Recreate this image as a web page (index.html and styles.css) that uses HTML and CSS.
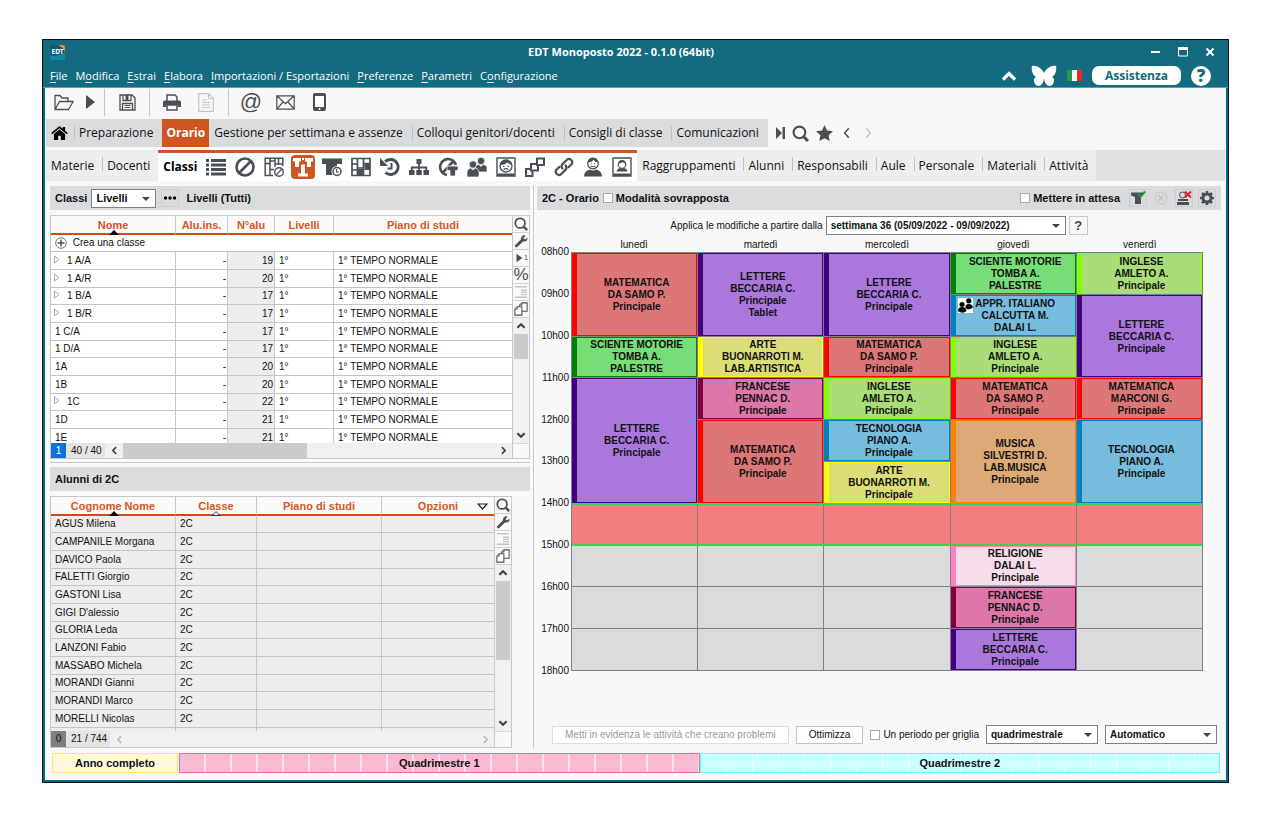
FILE: index.html
```html
<!DOCTYPE html>
<html lang="it">
<head>
  <meta charset="UTF-8" />
  <meta name="viewport" content="width=device-width, initial-scale=1.0" />
  <title>EDT Monoposto 2022</title>
  <link rel="stylesheet" href="styles.css">
</head>
<body>
  <!-- shared icons -->
  <svg class="sprite" aria-hidden="true">
    <symbol id="i-search" viewBox="0 0 16 16"><circle cx="7" cy="7" r="5.500" fill="none" stroke="currentColor" stroke-width="2"/><path d="M10.500 10.500L15 15" stroke="currentColor" stroke-width="2.800"/></symbol>
    <symbol id="i-wrench" viewBox="0 0 16 16"><path d="M2.600 13.600L9.500 7" stroke="currentColor" stroke-width="3.200" stroke-linecap="round"/><path d="M13.200 1.600L11 4.200l.6 1.600 1.800.3 2-2.200c.5 2.600-1.200 4.700-3.600 4.700-2.500 0-4-1.800-3.700-4.100C8.400 2.300 10.700.8 13.200 1.600z" fill="currentColor"/></symbol>
    <symbol id="i-lines" viewBox="0 0 16 16"><path d="M1 2h14M1 14h14M8 6h7M8 8.500h7M8 11h7" stroke="#c4c4c4" stroke-width="1.500"/></symbol>
    <symbol id="i-copy" viewBox="0 0 16 16"><g fill="#fff" stroke="currentColor" stroke-width="1.200"><path d="M6.500 3.500L9 1h6v9.500H6.500z"/><path d="M9 1v2.500H6.500"/><path d="M1 8l2.500-2.500H9V15H1z"/><path d="M3.500 5.500V8H1"/></g></symbol>
    <symbol id="i-up" viewBox="0 0 10 10"><path d="M2 6.500L5 3.500l3 3" fill="none" stroke="currentColor" stroke-width="1.800"/></symbol>
    <symbol id="i-down" viewBox="0 0 10 10"><path d="M2 3.500L5 6.500l3-3" fill="none" stroke="currentColor" stroke-width="1.800"/></symbol>
    <symbol id="i-left" viewBox="0 0 10 10"><path d="M6.500 2L3.500 5l3 3" fill="none" stroke="currentColor" stroke-width="1.600"/></symbol>
    <symbol id="i-right" viewBox="0 0 10 10"><path d="M3.500 2L6.500 5l-3 3" fill="none" stroke="currentColor" stroke-width="1.600"/></symbol>
    <symbol id="i-prev" viewBox="0 0 10 10"><path d="M6.500 1L3 5l3.500 4" fill="none" stroke="currentColor" stroke-width="1.200"/></symbol>
    <symbol id="i-next" viewBox="0 0 10 10"><path d="M3.500 1L7 5 3.500 9" fill="none" stroke="currentColor" stroke-width="1.200"/></symbol>
    <symbol id="i-tri" viewBox="0 0 8 10"><path d="M1.500 1v7L6 4.500z" fill="#fff" stroke="#aaa"/></symbol>
  </svg>

  <div class="window">
    <header class="titlebar">
      <div class="title-row">
        <svg class="logo" viewBox="0 0 16 16"><rect width="16" height="16" rx="2" fill="#0b5a74"/><path d="M9 0h5a2 2 0 0 1 2 2v6C15 4 12 2 9 0z" fill="#f08a3c"/><path d="M0 11c5 1 10 0 16-3v6a2 2 0 0 1-2 2H2a2 2 0 0 1-2-2z" fill="#1487a0"/><text x="8" y="10" text-anchor="middle" font-size="7" font-weight="bold" fill="#fff" font-family="Noto Sans, sans-serif">EDT</text></svg>
        <h1>EDT Monoposto 2022 - 0.1.0 (64bit)</h1>
        <div class="win-buttons">
          <button aria-label="Riduci"><svg viewBox="0 0 10 10"><path d="M0 5h9" stroke="#fff" stroke-width="2"/></svg></button>
          <button aria-label="Ingrandisci"><svg viewBox="0 0 10 10"><path d="M.5 1v8h9V1z" fill="none" stroke="#fff"/><path d="M0 1.500h10" stroke="#fff" stroke-width="3"/></svg></button>
          <button aria-label="Chiudi"><svg viewBox="0 0 10 10"><path d="M1.500 1.500l7 7M8.500 1.500l-7 7" stroke="#fff" stroke-width="2"/></svg></button>
        </div>
      </div>
      <div class="menu-row">
        <nav class="menu">
          <a href="#"><u>F</u>ile</a>
          <a href="#">M<u>o</u>difica</a>
          <a href="#"><u>E</u>strai</a>
          <a href="#"><u>E</u>labora</a>
          <a href="#"><u>I</u>mportazioni / Esportazioni</a>
          <a href="#"><u>P</u>referenze</a>
          <a href="#"><u>P</u>arametri</a>
          <a href="#">C<u>o</u>nfigurazione</a>
        </nav>
        <div class="help">
          <svg width="16" height="12" viewBox="0 0 16 12"><path d="M2 9.500L8 3.500l6 6" fill="none" stroke="#fff" stroke-width="3.200"/></svg>
          <svg width="26" height="22" viewBox="0 0 26 22"><path d="M13 8C11 4 6 0 1 1c-1 4 .5 9 4 11-2.500 1-2.500 4-1.500 6 1 3 5 4 7 1.500C12 18 13 15 13 13.500c0 1.500 1 4.500 2.500 6 2 2.500 6 1.500 7-1.500 1-2 1-5-1.500-6 3.500-2 5-7 4-11-5-1-10 3-12 7z" fill="#fff"/></svg>
          <svg width="15" height="11" viewBox="0 0 15 11"><path fill="#1f9a43" d="M0 0h5v11H0z"/><path fill="#fff" d="M5 0h5v11H5z"/><path fill="#e02b2b" d="M10 0h5v11h-5z"/></svg>
          <button class="pill">Assistenza</button>
          <button class="round" aria-label="Aiuto">?</button>
        </div>
      </div>
    </header>

    <div class="toolbar">
      <button aria-label="Apri"><svg width="20" height="17" viewBox="0 0 20 17"><path d="M1 15.500V1.500h5l2 2.500h6v3.500M1 15.500L5.500 7.500H19.200L14.500 15.500z" fill="none" stroke="currentColor" stroke-width="1.300" stroke-linejoin="round"/></svg></button>
      <button class="narrow" aria-label="Recenti"><svg width="9" height="14" viewBox="0 0 9 14"><path d="M0 0l9 7-9 7z" fill="currentColor"/></svg></button>
      <i></i>
      <button aria-label="Salva"><svg width="17" height="17" viewBox="0 0 17 17"><path d="M1 1h12l3 3v12H1zM4 1v5.500h8V1M3.500 16v-6.500h10V16" fill="none" stroke="currentColor" stroke-width="1.300"/><path d="M7 1.500h2v4H7zM5.500 11.500h6M5.500 13.500h6" stroke="currentColor" fill="currentColor"/></svg></button>
      <i></i>
      <button aria-label="Stampa"><svg width="18" height="17" viewBox="0 0 18 17"><path d="M4 7V1h8l2 2v4" fill="none" stroke="currentColor" stroke-width="1.500"/><path d="M1.500 6.500h15a1.500 1.500 0 0 1 1.500 1.500v5h-3v-2H3v2H0V8a1.500 1.500 0 0 1 1.500-1.500z" fill="currentColor"/><path d="M4 11v5h10v-5z" fill="#f8f8f8" stroke="currentColor" stroke-width="1.500"/></svg></button>
      <button aria-label="Documento" disabled><svg width="16" height="19" viewBox="0 0 16 19"><path d="M.7.700h9.800l4.800 4.800v12.800H.700zM10.500.700v4.800h4.800M4 7h5M4 9.500h8M4 12h8M4 14.500h8" fill="none" stroke="#c6c6c6" stroke-width="1.200"/></svg></button>
      <i></i>
      <button class="at" aria-label="E-mail">@</button>
      <button aria-label="Messaggio"><svg width="19" height="15" viewBox="0 0 19 15"><path d="M.8.800h17.400v13.400H.800zM.800.800l8.700 8 8.700-8M.800 14.200L7 7M18.200 14.200L12 7" fill="none" stroke="currentColor" stroke-width="1.200"/></svg></button>
      <button aria-label="Telefono"><svg width="13" height="18" viewBox="0 0 13 18"><rect width="13" height="18" rx="2" fill="currentColor"/><path d="M2 3h9v11H2z" fill="#fff"/><circle cx="6.500" cy="16" r="1" fill="#fff"/></svg></button>
    </div>

    <nav class="main-tabs">
      <div class="strip">
        <button class="home" aria-label="Home"><svg width="17" height="14" viewBox="0 0 18 15"><path d="M9 0L0 7.500l1.200 1.300L9 2.500l7.800 6.300L18 7.500l-3-2.500V1h-2.500v2z"/><path d="M3 8.500l6-4.800 6 4.800V15h-4.500v-4.500h-3V15H3z"/></svg></button>
        <button>Preparazione</button>
        <button class="active">Orario</button>
        <button class="first">Gestione per settimana e assenze</button>
        <button>Colloqui genitori/docenti</button>
        <button>Consigli di classe</button>
        <button>Comunicazioni</button>
      </div>
      <div class="tab-tools">
        <svg width="9" height="12" viewBox="0 0 9 12"><path d="M0 0l6 6-6 6zM6.500 0H9v12H6.500z" fill="currentColor"/></svg>
        <svg width="17" height="17"><use href="#i-search"/></svg>
        <svg width="17" height="16" viewBox="0 0 17 16"><path d="M8.500 0l2.500 5.400 6 .8-4.400 4.100L13.700 16 8.500 13.200 3.300 16l1.100-5.700L0 6.200l6-.8z" fill="currentColor"/></svg>
        <svg width="14" height="12"><use href="#i-prev"/></svg>
        <svg class="off" width="14" height="12"><use href="#i-next"/></svg>
      </div>
    </nav>

    <nav class="sub-tabs">
      <div class="strip">
        <button class="first">Materie</button>
        <button>Docenti</button>
      </div>
      <div class="current">
        <b>Classi</b>
        <svg viewBox="0 0 20 20"><path d="M0 2h3v3H0zM0 6.500h3v3H0zM0 11h3v3H0zM0 15.500h3v3H0zM5 2h15v3H5zM5 6.500h15v3H5zM5 11h15v3H5zM5 15.500h15v3H5z" fill="currentColor"/></svg>
        <svg viewBox="0 0 20 20"><circle cx="10" cy="10" r="8.500" fill="none" stroke="currentColor" stroke-width="2.600"/><path d="M4 16L16 4" stroke="currentColor" stroke-width="2.600"/></svg>
        <svg viewBox="0 0 20 20"><path d="M9 18.500H1.200V1.200h17.600V9M1 6.500h5M6 1v17.500M6 12.500h4M11 1v9M11 7h7.500M6 4h5M14.500 1v6" fill="none" stroke="currentColor" stroke-width="1.500"/><circle cx="15" cy="15" r="4.300" fill="#fff" stroke="currentColor" stroke-width="1.400"/><path d="M12 18l6-6" stroke="currentColor" stroke-width="1.300"/></svg>
        <svg class="picked" viewBox="0 0 24 24"><rect width="24" height="24" rx="4" fill="#cf5520"/><path d="M2 3h8v3.500H8V12H4V6.500H2zM14 3h8v3.500h-2V12h-4V6.500h-2zM10 9.500h4v9h3v3H7v-3h3zM11 3h2v2h-2z" fill="#fff"/></svg>
        <svg viewBox="0 0 20 20"><path d="M0 1.500h20V7h-5v11H4V7H0z" fill="currentColor"/><circle cx="15" cy="14.500" r="4.500" fill="#fff" stroke="#fff" stroke-width="2"/><circle cx="15" cy="14.500" r="4" fill="#fff" stroke="currentColor" stroke-width="1.500"/><path d="M14.500 12v3h2.500" fill="none" stroke="currentColor" stroke-width="1.200"/></svg>
        <svg viewBox="0 0 20 20"><path d="M1 1.500h18v17H1zM6.500 1.500v17M12.500 1.500v17M1 7h5.500M1 13h5.500M6.500 11h6M12.500 6.500h6" fill="none" stroke="currentColor" stroke-width="1.700"/><path d="M6.500 12h6v6.500h-6zM13.500 7H19v6h-5.500z" fill="currentColor"/></svg>
        <svg viewBox="0 0 20 20"><path d="M5 4.500Q8 2.300 11 2.500A7.500 7.500 0 1 1 5.500 15.500" fill="none" stroke="currentColor" stroke-width="2.800"/><path d="M0 1v8h8z" fill="currentColor"/><path d="M11.500 6v5.500H7.500" fill="none" stroke="currentColor" stroke-width="2"/></svg>
        <svg viewBox="0 0 20 20"><path d="M7.500 2h5v5h-5zM0 13h5.500v5H0zM7.300 13h5.500v5H7.300zM14.500 13H20v5h-5.500z" fill="currentColor"/><path d="M10 6v8M2.800 14v-3.500h14.500V14" fill="none" stroke="currentColor" stroke-width="1.800"/></svg>
        <svg viewBox="0 0 20 20"><path d="M9 18A8 8 0 1 1 17.800 8M4.500 16L15.500 4" fill="none" stroke="currentColor" stroke-width="2.600"/><path d="M9 9h11v4.500h-2.500V19H12v-5.500H9z" fill="currentColor" stroke="#fff" stroke-width=".8"/></svg>
        <svg viewBox="0 0 20 20"><g fill="currentColor" stroke="#fff" stroke-width=".7"><path d="M8.500 15V9.500q2-2.500 3.500-2l2 2 2-2q4 .5 4 3V15z"/><circle cx="14" cy="4" r="3.700"/><path d="M0 20v-5q.5-3.500 3.500-4l2.500 2 2.500-2q3 .5 3.500 4v5z"/><circle cx="6" cy="7.500" r="3.700"/></g></svg>
        <svg viewBox="0 0 20 20"><path d="M1 1h18v18H1z" fill="none" stroke="currentColor" stroke-width="1.400"/><circle cx="10" cy="9" r="6" fill="#fff" stroke="currentColor" stroke-width="1.300"/><path d="M4 8q1-5 6-5t6 5q-3-.5-4.500-2.500Q9 8 4 8z" fill="currentColor"/><path d="M7 9.500h1.500M11.500 9.500H13M7.500 12.700q2.500-2 5 0" stroke="currentColor" stroke-width="1.200" fill="none"/><path d="M1.500 16.500h17V19h-17z" fill="currentColor"/></svg>
        <svg viewBox="0 0 20 20"><g fill="#fff" stroke="currentColor" stroke-width="2"><path d="M1 12h6.500v7H1z"/><path d="M6 7h7v6.500H6z"/><path d="M12 1.500h7v6.500h-7z"/></g></svg>
        <svg viewBox="0 0 20 20"><g fill="none" stroke="currentColor" stroke-width="2.200" stroke-linecap="round"><path d="M8.500 11.500c-1.300-1.600-1.200-3.200.2-4.600L13 2.700c2.600-2.400 7 1.500 4.500 4.500l-3 3"/><path d="M11.500 8.500c1.300 1.600 1.200 3.200-.2 4.600L7 17.300c-2.600 2.400-7-1.500-4.500-4.500l3-3"/></g></svg>
        <svg viewBox="0 0 20 20"><path d="M1 19.500q0-5.500 6-7 3 2 6 0 6 1.500 6 7z" fill="currentColor"/><circle cx="10" cy="6.500" r="5.300" fill="#fff" stroke="currentColor" stroke-width="1.200"/><path d="M4.800 5.500Q5.500 1 10 1t5.200 4.500Q12 5 10.500 3 8.500 5.500 4.800 5.500z" fill="currentColor"/><path d="M7.800 6.700h1M11.200 6.700h1M7.500 9q2.500 1.500 5 0" stroke="currentColor" fill="none"/></svg>
        <svg viewBox="0 0 20 20"><path d="M1 1h18v18H1z" fill="#fff" stroke="currentColor" stroke-width="1.400"/><path d="M4.500 14.500q.5-3 3.500-3.500 2 1 4 0 3 .5 3.500 3.500zM1.500 16.500h17V19h-17z" fill="currentColor"/><circle cx="10" cy="7.500" r="3.800" fill="#fff" stroke="currentColor" stroke-width="1.200"/><path d="M6.200 6.500Q7 3.200 10 3.200t3.800 3.300Q11.500 6 10.500 5 9 6.500 6.200 6.500z" fill="currentColor"/></svg>
      </div>
      <div class="strip">
        <button class="first">Raggruppamenti</button>
        <button>Alunni</button>
        <button>Responsabili</button>
        <button>Aule</button>
        <button>Personale</button>
        <button>Materiali</button>
        <button>Attività</button>
      </div>
    </nav>

    <main class="panels">
      <section class="left">
        <div class="bar">
          <label for="filter">Classi</label>
          <span class="select filter"><select id="filter"><option>Livelli</option></select></span>
          <button class="flat dots" aria-label="Altro"><svg viewBox="0 0 16 16"><circle cx="3.500" cy="8" r="1.700"/><circle cx="8" cy="8" r="1.700"/><circle cx="12.500" cy="8" r="1.700"/></svg></button>
          <span>Livelli (Tutti)</span>
        </div>
        <div class="list classes">
          <div class="rows">
            <table>
              <colgroup><col class="c125"><col class="c52"><col class="c47"><col class="c59"><col></colgroup>
              <thead>
                <tr><th>Nome<svg class="sort" viewBox="0 0 10 5"><path d="M0 5l5-5 5 5z"/></svg></th><th>Alu.ins.</th><th>N°alu</th><th>Livelli</th><th>Piano di studi</th></tr>
              </thead>
              <tbody>
                <tr class="new"><td colspan="5"><svg width="12" height="12" viewBox="0 0 12 12"><circle cx="6" cy="6" r="5.300" fill="#fff" stroke="#777"/><path d="M6 2.500v7M2.500 6h7" stroke="#555" stroke-width="1.600"/></svg> Crea una classe</td></tr>
                <tr><td class="sub"><svg><use href="#i-tri"/></svg>1 A/A</td><td>-</td><td>19</td><td>1°</td><td>1° TEMPO NORMALE</td></tr>
                <tr><td class="sub"><svg><use href="#i-tri"/></svg>1 A/R</td><td>-</td><td>20</td><td>1°</td><td>1° TEMPO NORMALE</td></tr>
                <tr><td class="sub"><svg><use href="#i-tri"/></svg>1 B/A</td><td>-</td><td>17</td><td>1°</td><td>1° TEMPO NORMALE</td></tr>
                <tr><td class="sub"><svg><use href="#i-tri"/></svg>1 B/R</td><td>-</td><td>17</td><td>1°</td><td>1° TEMPO NORMALE</td></tr>
                <tr><td>1 C/A</td><td>-</td><td>17</td><td>1°</td><td>1° TEMPO NORMALE</td></tr>
                <tr><td>1 D/A</td><td>-</td><td>17</td><td>1°</td><td>1° TEMPO NORMALE</td></tr>
                <tr><td>1A</td><td>-</td><td>20</td><td>1°</td><td>1° TEMPO NORMALE</td></tr>
                <tr><td>1B</td><td>-</td><td>20</td><td>1°</td><td>1° TEMPO NORMALE</td></tr>
                <tr><td class="sub"><svg><use href="#i-tri"/></svg>1C</td><td>-</td><td>22</td><td>1°</td><td>1° TEMPO NORMALE</td></tr>
                <tr><td>1D</td><td>-</td><td>21</td><td>1°</td><td>1° TEMPO NORMALE</td></tr>
                <tr><td>1E</td><td>-</td><td>21</td><td>1°</td><td>1° TEMPO NORMALE</td></tr>
              </tbody>
            </table>
          </div>
          <div class="side">
            <button aria-label="Cerca"><svg><use href="#i-search"/></svg></button>
            <button aria-label="Opzioni"><svg><use href="#i-wrench"/></svg></button>
            <button class="level" aria-label="Livello 1"><svg viewBox="0 0 12 14"><path d="M3 2l7 5-7 5z" fill="currentColor"/></svg><small>1</small></button>
            <button class="pct">%</button>
            <button aria-label="Righe"><svg><use href="#i-lines"/></svg></button>
            <button aria-label="Copia"><svg><use href="#i-copy"/></svg></button>
            <div class="vscroll"><svg><use href="#i-up"/></svg><span class="thumb"></span><svg><use href="#i-down"/></svg></div>
          </div>
          <div class="foot">
            <span class="sel">1</span><span class="tot">40 / 40</span>
            <svg><use href="#i-left"/></svg><span class="thumb"></span><svg class="end"><use href="#i-right"/></svg>
          </div>
          <div class="corner"></div>
        </div>

        <div class="split"></div>

        <div class="bar">Alunni di 2C</div>
        <div class="list pupils">
          <div class="rows">
            <table>
              <colgroup><col class="c125"><col class="c81"><col class="c125"><col></colgroup>
              <thead>
                <tr><th>Cognome Nome<svg class="sort" viewBox="0 0 10 5"><path d="M0 5l5-5 5 5z"/></svg></th><th>Classe<svg class="sort" viewBox="0 0 10 5"><path d="M1 4.500L5 .7l4 3.800z" fill="#fff" stroke="#222" stroke-width=".9"/></svg></th><th>Piano di studi</th><th>Opzioni<svg class="drop" viewBox="0 0 11 7"><path d="M1 1h9L5.500 6z" fill="#fff" stroke="#222" stroke-width="1.200"/></svg></th></tr>
              </thead>
              <tbody>
                <tr><td>AGUS Milena</td><td>2C</td><td></td><td></td></tr>
                <tr><td>CAMPANILE Morgana</td><td>2C</td><td></td><td></td></tr>
                <tr><td>DAVICO Paola</td><td>2C</td><td></td><td></td></tr>
                <tr><td>FALETTI Giorgio</td><td>2C</td><td></td><td></td></tr>
                <tr><td>GASTONI Lisa</td><td>2C</td><td></td><td></td></tr>
                <tr><td>GIGI D'alessio</td><td>2C</td><td></td><td></td></tr>
                <tr><td>GLORIA Leda</td><td>2C</td><td></td><td></td></tr>
                <tr><td>LANZONI Fabio</td><td>2C</td><td></td><td></td></tr>
                <tr><td>MASSABO Michela</td><td>2C</td><td></td><td></td></tr>
                <tr><td>MORANDI Gianni</td><td>2C</td><td></td><td></td></tr>
                <tr><td>MORANDI Marco</td><td>2C</td><td></td><td></td></tr>
                <tr><td>MORELLI Nicolas</td><td>2C</td><td></td><td></td></tr>
                <tr><td></td><td></td><td></td><td></td></tr>
              </tbody>
            </table>
          </div>
          <div class="side">
            <button aria-label="Cerca"><svg><use href="#i-search"/></svg></button>
            <button aria-label="Opzioni"><svg><use href="#i-wrench"/></svg></button>
            <button aria-label="Righe"><svg><use href="#i-lines"/></svg></button>
            <button aria-label="Copia"><svg><use href="#i-copy"/></svg></button>
            <div class="vscroll"><svg><use href="#i-up"/></svg><span class="thumb"></span><svg><use href="#i-down"/></svg></div>
          </div>
          <div class="foot idle">
            <span class="sel">0</span><span class="tot">21 / 744</span>
            <svg><use href="#i-left"/></svg><svg class="end"><use href="#i-right"/></svg>
          </div>
          <div class="corner"></div>
        </div>
      </section>

      <section class="right">
        <div class="bar">
          <span>2C - Orario</span>
          <label><input type="checkbox"> Modalità sovrapposta</label>
          <label class="wait"><input type="checkbox"> Mettere in attesa</label>
          <button class="flat" aria-label="Posiziona"><svg viewBox="0 0 16 16"><path d="M1 2.500h12V6h-2v8H5V7L1 5.500z" fill="currentColor"/><path d="M8 4l2.500 3L15 1.500" fill="none" stroke="#1a9a3a" stroke-width="2"/></svg></button>
          <button class="flat plain" aria-label="Annulla" disabled><svg viewBox="0 0 16 16"><circle cx="8" cy="8" r="6" fill="none" stroke="#c2c3c5"/><path d="M5.500 5.500l5 5M10.500 5.500l-5 5" stroke="#c2c3c5" stroke-width="1.400"/></svg></button>
          <button class="flat" aria-label="Elimina"><svg viewBox="0 0 16 16"><circle cx="6.500" cy="5" r="3" fill="none" stroke="currentColor"/><path d="M2 9h10v2H2zM1 12h12v3H1z" fill="currentColor"/><path d="M9 1.500l6 6M15 1.500l-6 6" stroke="#e3202a" stroke-width="1.800"/></svg></button>
          <button class="flat" aria-label="Impostazioni"><svg viewBox="0 0 16 16"><circle cx="8" cy="8" r="4" fill="none" stroke="currentColor" stroke-width="3"/><path d="M8 1v3M8 12v3M1 8h3M12 8h3M3 3l2 2M11 11l2 2M13 3l-2 2M5 11l-2 2" stroke="currentColor" stroke-width="2.600"/></svg></button>
        </div>

        <div class="apply">
          <label for="week">Applica le modifiche a partire dalla</label>
          <span class="select"><select id="week"><option>settimana 36 (05/09/2022 - 09/09/2022)</option></select></span>
          <button class="ask">?</button>
        </div>

        <div class="planner">
          <div class="days"><span>lunedì</span><span>martedì</span><span>mercoledì</span><span>giovedì</span><span>venerdì</span></div>
          <div class="hours">
            <span>08h00</span><span>09h00</span><span>10h00</span><span>11h00</span><span>12h00</span><span>13h00</span><span>14h00</span><span>15h00</span><span>16h00</span><span>17h00</span><span>18h00</span>
          </div>
          <!-- d = day, h = first hour, n = length in hours -->
          <div class="week">
            <div class="lesson mat d1 h1 n2">MATEMATICA<br>DA SAMO P.<br>Principale</div>
            <div class="lesson sci d1 h3">SCIENTE MOTORIE<br>TOMBA A.<br>PALESTRE</div>
            <div class="lesson let d1 h4 n3">LETTERE<br>BECCARIA C.<br>Principale</div>

            <div class="lesson let d2 h1 n2">LETTERE<br>BECCARIA C.<br>Principale<br>Tablet</div>
            <div class="lesson art d2 h3">ARTE<br>BUONARROTI M.<br>LAB.ARTISTICA</div>
            <div class="lesson fra d2 h4">FRANCESE<br>PENNAC D.<br>Principale</div>
            <div class="lesson mat d2 h5 n2">MATEMATICA<br>DA SAMO P.<br>Principale</div>

            <div class="lesson let d3 h1 n2">LETTERE<br>BECCARIA C.<br>Principale</div>
            <div class="lesson mat d3 h3">MATEMATICA<br>DA SAMO P.<br>Principale</div>
            <div class="lesson ing d3 h4">INGLESE<br>AMLETO A.<br>Principale</div>
            <div class="lesson tec d3 h5">TECNOLOGIA<br>PIANO A.<br>Principale</div>
            <div class="lesson art d3 h6">ARTE<br>BUONARROTI M.<br>Principale</div>

            <div class="lesson sci d4 h1">SCIENTE MOTORIE<br>TOMBA A.<br>PALESTRE</div>
            <div class="lesson tec d4 h2"><svg class="group" viewBox="0 0 15 15"><path fill="#fff" d="M0 0h15v15H0z"/><circle cx="10.800" cy="2.800" r="2.600"/><path d="M7.500 10q-.5-4 3.300-4T15 9.500q-2.500 2.500-6 1.500z"/><circle cx="4" cy="6.500" r="2.800" stroke="#fff" stroke-width=".5"/><path d="M0 13q0-4 4-4t4.500 4Q4.500 16.500 0 13z"/></svg>APPR. ITALIANO<br>CALCUTTA M.<br>DALAI L.</div>
            <div class="lesson ing d4 h3">INGLESE<br>AMLETO A.<br>Principale</div>
            <div class="lesson mat d4 h4">MATEMATICA<br>DA SAMO P.<br>Principale</div>
            <div class="lesson mus d4 h5 n2">MUSICA<br>SILVESTRI D.<br>LAB.MUSICA<br>Principale</div>

            <div class="lesson ing d5 h1">INGLESE<br>AMLETO A.<br>Principale</div>
            <div class="lesson let d5 h2 n2">LETTERE<br>BECCARIA C.<br>Principale</div>
            <div class="lesson mat d5 h4">MATEMATICA<br>MARCONI G.<br>Principale</div>
            <div class="lesson tec d5 h5 n2">TECNOLOGIA<br>PIANO A.<br>Principale</div>

            <div class="pause"><span></span><span></span><span></span><span></span><span></span></div>

            <div class="free d1 h8"></div><div class="free d2 h8"></div><div class="free d3 h8"></div>
            <div class="lesson rel d4 h8">RELIGIONE<br>DALAI L.<br>Principale</div>
            <div class="free d5 h8"></div>
            <div class="free d1 h9"></div><div class="free d2 h9"></div><div class="free d3 h9"></div>
            <div class="lesson fra d4 h9">FRANCESE<br>PENNAC D.<br>Principale</div>
            <div class="free d5 h9"></div>
            <div class="free d1 h10"></div><div class="free d2 h10"></div><div class="free d3 h10"></div>
            <div class="lesson let d4 h10">LETTERE<br>BECCARIA C.<br>Principale</div>
            <div class="free d5 h10"></div>
          </div>
        </div>

        <div class="actions">
          <button class="show" disabled>Metti in evidenza le attività che creano problemi</button>
          <button>Ottimizza</button>
          <label><input type="checkbox"> Un periodo per griglia</label>
          <span class="select"><select aria-label="Periodo"><option>quadrimestrale</option></select></span>
          <span class="select"><select aria-label="Modo"><option>Automatico</option></select></span>
        </div>
      </section>
    </main>

    <footer class="periods">
      <div class="year">Anno completo</div>
      <div class="q1">Quadrimestre 1</div>
      <div class="q2">Quadrimestre 2</div>
    </footer>
  </div>
</body>
</html>
```
FILE: styles.css
```css
* { box-sizing: border-box; }
body {
  margin: 0;
  padding: 39px 42px;
  background: #fff;
  color: #111;
  font: 10px/12px "Liberation Sans", Arial, sans-serif;
}
button, select { font: inherit; color: inherit; margin: 0; padding: 0; border: 0; background: none; }
button svg { display: block; }
.sprite { display: none; }

.window {
  border: 1px solid #0a1216;
  background: #f8f8f8;
  box-shadow: inset 2px 0 #006a80, inset -2px 0 #006a80, inset 0 -2px #006a80;
  padding-bottom: 9px;
}

/* title bar and menu */
.titlebar {
  background: #146a7e;
  color: #fff;
  border-bottom: 1px solid #4fa3b5;
  font-family: "Open Sans", "Noto Sans", sans-serif;
}
.title-row { display: flex; align-items: center; height: 24px; padding: 0 13px 0 7px; }
.logo { width: 15px; height: 15px; }
h1 { flex: 1; margin: 0; padding-left: 26px; font-size: 11px; line-height: 14px; text-align: center; }
.win-buttons { display: flex; gap: 17px; }
.win-buttons svg { width: 10px; height: 10px; }
.menu-row { display: flex; justify-content: space-between; align-items: center; height: 23px; padding: 0 17px 0 7px; }
.menu { display: flex; gap: 8px; font-size: 11px; line-height: 16px; }
.menu a { color: #fff; text-decoration: none; }
.menu u { text-underline-offset: 2px; }
.help { display: flex; align-items: center; gap: 10px; }
.help svg:first-child { margin-right: 4px; }
.pill {
  width: 89px;
  height: 19px;
  border-radius: 7px;
  background: #fff;
  color: #146a7e;
  font-size: 12px;
  font-weight: bold;
}
.round {
  width: 20px;
  height: 20px;
  border-radius: 10px;
  background: #fff;
  color: #146a7e;
  font-size: 17px;
  font-weight: 900;
  line-height: 20px;
}

/* toolbar */
.toolbar { display: flex; align-items: center; height: 31px; padding: 0 0 3px 4px; color: #4a4f55; }
.toolbar button { width: 34px; height: 27px; display: flex; align-items: center; justify-content: center; }
.toolbar .narrow { width: 18px; }
.toolbar i { width: 1px; height: 27px; margin: 0 5px; background: #c8c8c8; }
.toolbar .at { font: 22px/22px "Liberation Sans", sans-serif; }

/* tabs */
.main-tabs, .sub-tabs { display: flex; font-family: "Open Sans", "Noto Sans", sans-serif; font-size: 12px; margin: 0 3px; }
.main-tabs { height: 28px; margin-bottom: 3px; }
.main-tabs .strip { display: flex; background: #dadbdd; }
.strip button { position: relative; padding: 0 9px 0 5px; }
.strip button::before {
  content: "";
  position: absolute;
  left: 0;
  top: 7px;
  height: 14px;
  border-left: 1px solid #c0c0c0;
}
.strip .home::before, .strip .first::before, .strip .active::before { display: none; }
.strip .home { padding: 0 6px 0 5px; }
.strip .active { background: #cf5520; color: #fff; font-weight: bold; padding: 0 4px; }
.tab-tools { display: flex; align-items: center; gap: 7px; padding-left: 8px; color: #4a4f55; }
.off { color: #c4c4c4; }
.sub-tabs { height: 31px; margin-bottom: 5px; background: #e0e0e0; }
.sub-tabs .strip { display: flex; background: #ededed; }
.sub-tabs .strip button { padding-right: 8px; }
.current {
  flex: none;
  width: 479px;
  display: flex;
  align-items: center;
  justify-content: space-between;
  padding: 0 5px 0 5px;
  border-top: 3px solid #cf5520;
  background: #fff;
  color: #4a4f55;
}
.current b { color: #000; }
.current svg { width: 20px; height: 20px; }
.current .picked { width: 24px; height: 24px; margin: 0 -2px; }

/* panels */
.panels { display: grid; grid-template-columns: 480px 1px 1fr; column-gap: 3px; margin: 0 7px 5px; }
.panels::before { content: ""; grid-column: 2; background: #c8c8c8; }
.left { grid-column: 1; grid-row: 1; }
.right { grid-column: 3; grid-row: 1; display: flex; flex-direction: column; }
.bar {
  display: flex;
  align-items: center;
  gap: 4px;
  height: 24px;
  padding: 0 5px;
  background: #dadbdd;
  font-size: 11px;
  font-weight: bold;
}
.bar label { display: flex; align-items: center; gap: 3px; }
.flat { width: 18px; height: 18px; margin-left: 1px; display: flex; align-items: center; justify-content: center; border: 1px solid #cdcecf; color: #4a4f55; }
.flat svg { width: 16px; height: 16px; }
.flat.plain { border-color: transparent; }
.dots { margin-right: 3px; }
.split { height: 5px; margin-top: 3px; border-top: 1px solid #c8c8c8; }

.select { position: relative; display: inline-block; }
.select select {
  appearance: none;
  width: 100%;
  height: 19px;
  padding: 0 20px 0 4px;
  border: 1px solid #7d8088;
  background: #fff;
  font-weight: bold;
}
.select::after {
  content: "";
  position: absolute;
  right: 6px;
  top: 8px;
  border: 4px solid transparent;
  border-top-color: #444;
  border-bottom: 0;
}
.filter { width: 65px; }
input[type=checkbox] { appearance: none; width: 10px; height: 10px; margin: 0; border: 1px solid #aaa; background: #fff; }

/* lists */
.list {
  display: grid;
  grid-template-columns: 1fr 17px;
  margin-top: 5px;
  border: 1px solid #c8c8c8;
}
.classes { grid-template-rows: 227px 15px; }
.pupils { grid-template-rows: 234px 16px; width: 462px; }
.rows { overflow: hidden; }
table { width: 100%; table-layout: fixed; border-collapse: separate; border-spacing: 0; }
.c125 { width: 125px; }
.c81 { width: 81px; }
.c59 { width: 59px; }
.c52 { width: 52px; }
.c47 { width: 47px; }
th {
  position: relative;
  height: 19px;
  padding: 0;
  border-right: 1px solid #c8c8c8;
  border-bottom: 2px solid #cf4a14;
  background: #fafafa;
  color: #d9561f;
  font-size: 11px;
}
.sort { position: absolute; left: 58px; bottom: -2px; width: 10px; height: 5px; }
th:nth-child(2) .sort { left: 35px; }
.drop { position: absolute; right: 6px; top: 6px; width: 11px; height: 7px; }
tbody tr { height: 18px; }
tbody tr:nth-child(3n+1) { height: 17px; }
td {
  padding: 0 4px;
  border-right: 1px solid #c8c8c8;
  border-bottom: 1px solid #c4c4c4;
  background: #fff;
  white-space: nowrap;
}
th:last-child, td:last-child { border-right: 0; }
.classes td:nth-child(2), .classes td:nth-child(3) { text-align: right; padding-right: 1px; }
.classes td:nth-child(3), .pupils td { background: #ededed; }
.new svg { vertical-align: -3px; margin-right: 3px; }
.sub svg { width: 8px; height: 10px; margin: 0 6px 0 -2px; vertical-align: -1px; }

.side { display: flex; flex-direction: column; border-left: 1px solid #c8c8c8; }
.side button {
  position: relative;
  height: 17px;
  border-bottom: 1px solid #d0d0d0;
  color: #4a4f55;
  display: flex;
  align-items: center;
  justify-content: center;
}
.side button svg { width: 14px; height: 14px; }
.side .pct { font-size: 17px; line-height: 16px; }
.level small { font-size: 7px; }
.side .level svg { width: 10px; }
.vscroll { flex: 1; display: flex; flex-direction: column; align-items: center; background: #f0f0f0; }
.vscroll svg { width: 12px; height: 12px; margin: 2px 0; color: #444; }
.vscroll .thumb { width: 14px; height: 25px; background: #cbcbcb; margin-bottom: auto; }
.pupils .thumb { height: 79px; }
.foot { display: flex; align-items: center; background: #f0f0f0; }
.foot span { height: 100%; line-height: 15px; }
.sel { width: 15px; text-align: center; background: #0b74d8; color: #fff; }
.tot { padding: 0 3px 0 5px; background: #e4e4e4; }
.foot svg { width: 11px; height: 11px; margin: 0 3px 0 4px; color: #444; }
.foot .thumb { width: 184px; background: #cbcbcb; }
.foot .end { margin-left: auto; }
.idle .sel { background: #808080; color: #111; }
.idle svg { color: #b8b8b8; }
.corner { border-left: 1px solid #c8c8c8; border-top: 1px solid #d4d4d4; }

/* timetable */
.wait { margin-left: auto; margin-right: 4px; }
.apply { display: flex; align-items: center; justify-content: center; gap: 3px; margin-top: 6px; }
.apply .select { width: 240px; }
.ask { width: 19px; height: 19px; border: 1px solid #c8c8c8; font-size: 13px; font-weight: bold; color: #444; }
.planner { display: grid; grid-template-columns: 34px 1fr; margin: 4px 18px 0 0; }
.days { grid-column: 2; display: grid; grid-template-columns: repeat(5, 1fr); height: 13px; text-align: center; }
.hours { display: flex; flex-direction: column; justify-content: space-between; margin: -6px 2px -6px 0; text-align: right; }
.week {
  display: grid;
  grid-template: repeat(10, minmax(0, 1fr)) / repeat(5, minmax(0, 1fr));
  gap: 1px;
  height: 419px;
  border: 1px solid #808080;
  background: #808080;
}
.d1 { grid-column: 1; }
.d2 { grid-column: 2; }
.d3 { grid-column: 3; }
.d4 { grid-column: 4; }
.d5 { grid-column: 5; }
.h1 { grid-row-start: 1; }
.h2 { grid-row-start: 2; }
.h3 { grid-row-start: 3; }
.h4 { grid-row-start: 4; }
.h5 { grid-row-start: 5; }
.h6 { grid-row-start: 6; }
.h8 { grid-row-start: 8; }
.h9 { grid-row-start: 9; }
.h10 { grid-row-start: 10; }
.n2 { grid-row-end: span 2; }
.n3 { grid-row-end: span 3; }
.free { background: #dadbdd; }
.lesson {
  position: relative;
  display: flex;
  flex-direction: column;
  justify-content: center;
  padding-top: 1px;
  border: 1px solid;
  border-left-width: 5px;
  font-weight: bold;
  text-align: center;
}
.mat { background: #dd7777; border-color: #ff0000; }
.let { background: #aa77dd; border-color: #400080; }
.sci { background: #77dd77; border-color: #008000; }
.art { background: #dddd77; border-color: #ffff00; }
.fra { background: #dd77aa; border-color: #800040; }
.ing { background: #aadd77; border-color: #80ff00; }
.tec { background: #77bbdd; border-color: #0080c0; }
.mus { background: #ddaa77; border-color: #ff8000; }
.rel { background: #f6dde9; border-color: #ff80c0; }
.group { position: absolute; left: 2px; top: 2px; width: 15px; height: 15px; }
.pause {
  grid-column: 1 / -1;
  grid-row: 7;
  display: grid;
  grid-template-columns: repeat(5, 1fr);
  gap: 1px;
  margin: -1px 0;
  border: solid #3fd04f;
  border-width: 2px 0;
}
.pause span { background: #f38080; }

.actions { display: flex; align-items: center; justify-content: flex-end; gap: 7px; margin: auto 4px 4px 0; }
.actions button { height: 18px; padding: 0 12px; border: 1px solid #c4c4c4; background: #fff; }
.actions .show { color: #999; border-color: #ddd; }
.actions label { display: flex; gap: 3px; align-items: center; }
.actions .select { width: 112px; }

/* periods */
.periods { display: grid; grid-template-columns: 127px 1fr 1fr; margin: 0 8px 0 9px; font-size: 11px; font-weight: bold; text-align: center; line-height: 18px; }
.periods div { border: 1px solid; }
.periods .year { background: #fff8dc; border-color: #ffe27a; margin-right: 1px; }
.periods .q1 { border-color: #ee6a9a; background: repeating-linear-gradient(90deg, #f8bbd2 0 24px, #fde4ee 24px 26px); }
.periods .q2 { border-color: #66ffff; background: repeating-linear-gradient(90deg, #ccffff 0 25px, #f4ffff 25px 26px); }
```
